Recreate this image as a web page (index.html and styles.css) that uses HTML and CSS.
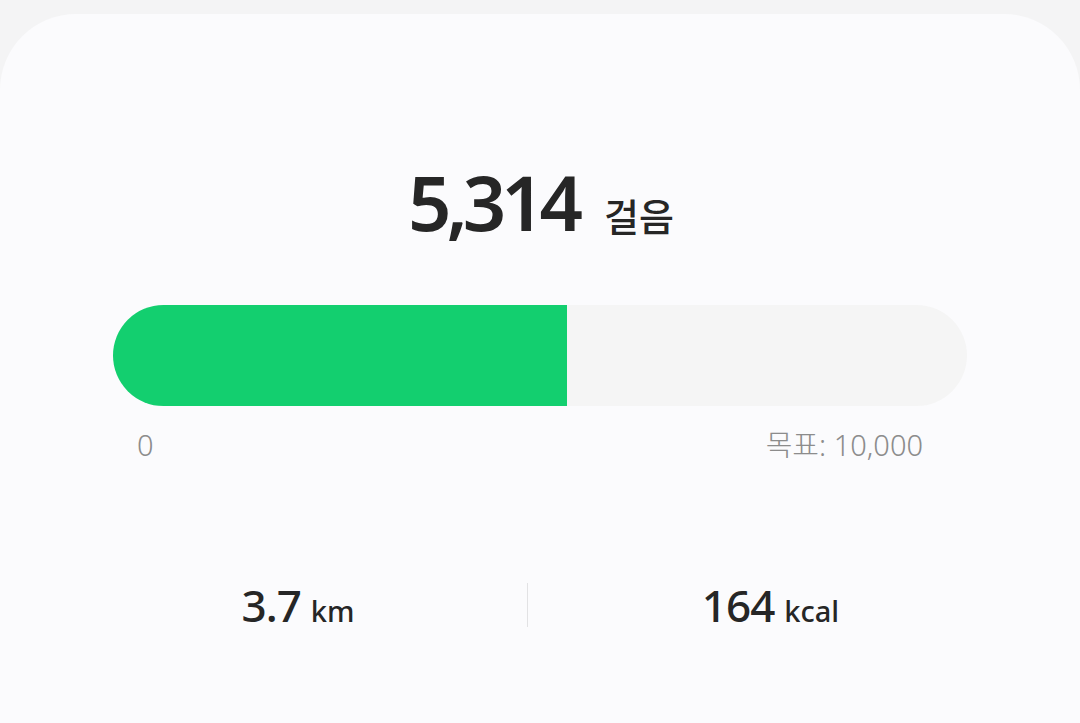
FILE: index.html
```html
<!DOCTYPE html>
<html lang="ko">
<head>
    <meta charset="UTF-8">
    <meta name="viewport" content="width=device-width, initial-scale=1.0">
    <title>걸음 수</title>
    <link rel="stylesheet" href="styles.css">
</head>
<body>
    <div class="card">
        <div class="steps">
            <span class="steps-value">5,314</span>
            <span class="steps-unit">걸음</span>
        </div>

        <div class="progress">
            <div class="progress-fill" style="width: 53.14%"></div>
        </div>
        <div class="progress-labels">
            <span>0</span>
            <span>목표: 10,000</span>
        </div>

        <div class="stats">
            <div class="stat">
                <span class="stat-value">3.7</span>
                <span class="stat-unit">km</span>
            </div>
            <div class="stat-divider"></div>
            <div class="stat">
                <span class="stat-value">164</span>
                <span class="stat-unit">kcal</span>
            </div>
        </div>
    </div>
</body>
</html>
```

FILE: styles.css
```css
* {
    margin: 0;
    padding: 0;
    box-sizing: border-box;
}

body {
    font-family: 'Noto Sans', 'Noto Sans CJK KR', sans-serif;
    background: #f4f4f5;
    min-height: 100vh;
    padding-top: 14px;
    overflow: hidden;
}

.card {
    background: #fbfbfd;
    border-radius: 76px 76px 0 0;
    min-height: 720px;
    padding: 150px 113px 0;
    color: #262626;
}

.steps {
    display: flex;
    justify-content: center;
    align-items: baseline;
    gap: 26px;
    height: 100px;
    padding-left: 2px;
}

.steps-value {
    font-size: 76px;
    font-weight: 600;
    letter-spacing: -5px;
    line-height: 1;
}

.steps-unit {
    font-family: 'Noto Sans CJK KR', sans-serif;
    font-size: 38px;
    font-weight: 500;
    line-height: 1;
}

.progress {
    margin-top: 41px;
    height: 101px;
    background: #f5f5f5;
    border-radius: 51px;
    overflow: hidden;
}

.progress-fill {
    height: 100%;
    background: #13cf6f;
}

.progress-labels {
    display: flex;
    justify-content: space-between;
    padding: 22px 44px 0 24px;
    font-size: 29px;
    font-weight: 300;
    color: #8c8c8c;
    line-height: 1.2;
}

.stats {
    display: grid;
    grid-template-columns: 458px 1px 1fr;
    align-items: center;
    margin: 120px -46px 0 -44px;
}

.stat {
    display: flex;
    justify-content: center;
    align-items: baseline;
    gap: 10px;
}

.stat-value {
    font-size: 44px;
    font-weight: 500;
    letter-spacing: -1px;
    line-height: 1;
}

.stat-unit {
    font-size: 29px;
    font-weight: 500;
    line-height: 1;
}

.stat-divider {
    height: 44px;
    background: #e2e2e4;
}
```
